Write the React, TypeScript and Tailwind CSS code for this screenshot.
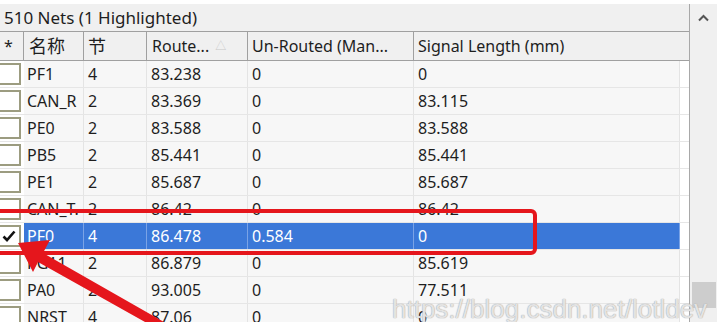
import React from 'react';

type Net = { name: string; nodes: string; routed: string; unrouted: string; signal: string; checked?: boolean };

const nets: Net[] = [
  { name: 'PF1', nodes: '4', routed: '83.238', unrouted: '0', signal: '0' },
  { name: 'CAN_R', nodes: '2', routed: '83.369', unrouted: '0', signal: '83.115' },
  { name: 'PE0', nodes: '2', routed: '83.588', unrouted: '0', signal: '83.588' },
  { name: 'PB5', nodes: '2', routed: '85.441', unrouted: '0', signal: '85.441' },
  { name: 'PE1', nodes: '2', routed: '85.687', unrouted: '0', signal: '85.687' },
  { name: 'CAN_T.', nodes: '2', routed: '86.42', unrouted: '0', signal: '86.42' },
  { name: 'PF0', nodes: '4', routed: '86.478', unrouted: '0.584', signal: '0', checked: true },
  { name: 'PG11', nodes: '2', routed: '86.879', unrouted: '0', signal: '85.619' },
  { name: 'PA0', nodes: '2', routed: '93.005', unrouted: '0', signal: '77.511' },
  { name: 'NRST', nodes: '4', routed: '87.06', unrouted: '0', signal: '0' },
];

const cols = 'grid grid-cols-[24px_60px_63px_101px_166px_266px]';

function Checkbox({ checked }: { checked?: boolean }) {
  return (
    <div className="-ml-[3px] mt-[2px] flex h-[22px] w-[24px] items-center justify-center border-2 border-[#9c9c80] bg-white">
      {checked && (
        <svg width="14" height="12" viewBox="0 0 14 12">
          <path d="M1.5 6.5 L5 10 L12.5 1.5" fill="none" stroke="#111" strokeWidth="2.6" />
        </svg>
      )}
    </div>
  );
}

function Row({ net }: { net: Net }) {
  const hi = net.checked;
  const cell = hi
    ? 'overflow-hidden whitespace-nowrap border-r border-[#7aa3e6] bg-[#3b78d8] leading-[26px] text-white'
    : 'overflow-hidden whitespace-nowrap border-r border-[#e4e4e4] bg-[#f7f7f7] leading-[26px] text-[#1e1e1e]';
  return (
    <div className={`${cols} h-[27px] border-b border-[#e6e6e6]`}>
      <div className="overflow-hidden bg-white">
        <Checkbox checked={net.checked} />
      </div>
      {[net.name, net.nodes, net.routed, net.unrouted, net.signal].map((v, i) => (
        <div key={i} className={`${cell} ${i === 0 ? 'pl-[3px]' : 'pl-[4px]'}`}>
          {v}
        </div>
      ))}
    </div>
  );
}

export default function App() {
  return (
    <div
      className="relative flex h-[322px] w-[717px] overflow-hidden bg-white pt-[4px] text-[16px]"
      style={{ fontFamily: '"Noto Sans", "Noto Sans CJK SC", sans-serif' }}
    >
      <div className="flex w-[690px] flex-col border-r border-[#a8a8a8]">
        <div className="h-[27px] bg-[#f0f0f0] pl-[4px] text-[17px] leading-[27px] text-[#1e1e1e]">510 Nets (1 Highlighted)</div>
        <div className={`${cols} h-[30px] border-y border-[#a0a0a0] bg-[#f0f0f0] text-[#1e1e1e]`}>
          <div className="border-r border-[#a0a0a0] pl-[4px] leading-[28px]">*</div>
          <div className="border-r border-[#a0a0a0] pl-[5px] text-[18px] leading-[28px]">名称</div>
          <div className="border-r border-[#a0a0a0] pl-[4px] text-[18px] leading-[28px]">节</div>
          <div className="flex items-center border-r border-[#a0a0a0] pl-[5px] leading-[28px]">
            Route...
            <span className="ml-[6px] text-[11px] text-[#c8c8c8]">△</span>
          </div>
          <div className="overflow-hidden whitespace-nowrap border-r border-[#a0a0a0] pl-[4px] leading-[28px]">Un-Routed (Man...</div>
          <div className="pl-[4px] leading-[28px]">Signal Length (mm)</div>
        </div>
        <div className="flex flex-col">
          {nets.map((n) => (
            <Row key={n.name} net={n} />
          ))}
        </div>
      </div>

      <div className="flex w-[27px] flex-col items-center bg-[#f0f0f0]">
        <svg className="mt-[10px]" width="11" height="8" viewBox="0 0 11 8">
          <path d="M1 6.5 L5.5 2 L10 6.5" fill="none" stroke="#555" strokeWidth="2" />
        </svg>
        <div className="mt-auto mb-[14px] h-[26px] w-[24px] bg-[#cdcdcd]" />
      </div>

      {/* watermark */}
      <div
        className="pointer-events-none absolute left-[392px] top-[290px] whitespace-nowrap text-[26px] text-white/70"
        style={{ fontFamily: '"Liberation Sans", sans-serif', textShadow: '0 0 1px #a8a8a8, 0 0 1px #a8a8a8' }}
      >
        https://blog.csdn.net/lotldev
      </div>

      {/* red annotation box */}
      <div className="pointer-events-none absolute left-[-10px] top-[209px] h-[46px] w-[547px] rounded-[6px] border-[4px] border-[#e5161c]" />

      {/* red arrow */}
      <svg className="pointer-events-none absolute left-0 top-0" width="717" height="322" viewBox="0 0 717 322">
        <polygon points="18,243 50,240 43,253 178,330 170,336 38,262 33,272" fill="#e5161c" />
      </svg>
    </div>
  );
}
